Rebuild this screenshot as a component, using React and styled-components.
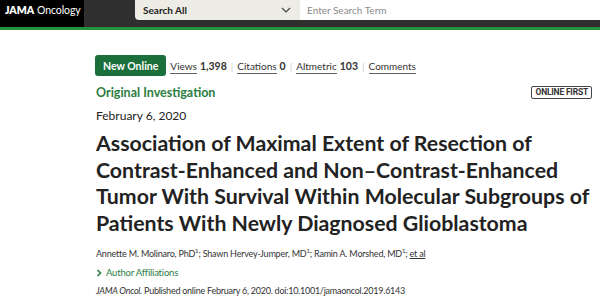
import React from 'react';
import styled, { createGlobalStyle } from 'styled-components';

const GlobalStyle = createGlobalStyle`
    body {
        margin: 0;
        background: #fff;
        font-family: 'Lato', 'Noto Sans', sans-serif;
    }
`

const Header = styled.header`
    display: flex;
    height: 27px;
    background-color: #2f2f2f;
    border-bottom: 3px solid #23913d;
`
const Logo = styled.div`
    width: 84px;
    background-color: #000;
    color: #fff;
    font-size: 10.5px;
    letter-spacing: -0.1px;
    display: flex;
    align-items: center;
    padding-left: 5px;
    padding-bottom: 7px;
    box-sizing: border-box;
    b {
        font-weight: 800;
        margin-right: 3px;
    }
`
const SearchBar = styled.div`
    flex: 1;
    display: flex;
    height: 20px;
    margin-left: 51px;
`
const SearchSelect = styled.div`
    width: 165px;
    background-color: #eeede5;
    border-bottom-left-radius: 4px;
    display: flex;
    align-items: center;
    justify-content: space-between;
    padding: 0 9px 0 8px;
    box-sizing: border-box;
    font-size: 10px;
    font-weight: 700;
    color: #222;
`
const SearchInput = styled.div`
    flex: 1;
    background-color: #fff;
    display: flex;
    align-items: center;
    padding-left: 7px;
    font-size: 10px;
    color: #8a8a8a;
`
const Main = styled.main`
    padding: 25px 8px 0 96px;
    color: #222;
`
const MetaRow = styled.div`
    display: flex;
    align-items: center;
    gap: 4px;
    font-size: 10px;
`
const NewBadge = styled.span`
    background-color: #1b6f3b;
    color: #fff;
    font-weight: 700;
    font-size: 10.5px;
    padding: 0 8px;
    height: 21px;
    display: flex;
    align-items: center;
    border-radius: 3px;
    margin-left: -1px;
    margin-right: 0;
`
const Metric = styled.span`
    color: #333;
    u {
        text-decoration: none;
        border-bottom: 1px solid #6a5d5d;
        padding-bottom: 1px;
    }
    b {
        font-weight: 700;
        margin-left: 3px;
        font-size: 10.5px;
    }
`
const Sep = styled.span`
    color: #ccc;
    font-size: 10px;
`
const TypeRow = styled.div`
    display: flex;
    justify-content: space-between;
    align-items: center;
    margin-top: 9px;
`
const ArticleType = styled.div`
    color: #2b7d3f;
    font-weight: 700;
    font-size: 12.5px;
`
const OnlineFirst = styled.span`
    border: 1.5px solid #444;
    border-radius: 2px;
    font-family: 'Roboto', sans-serif;
    font-weight: 700;
    font-size: 8.5px;
    letter-spacing: -0.2px;
    color: #333;
    padding: 0 3px;
    line-height: 11px;
`
const DateLine = styled.div`
    font-size: 12px;
    margin-top: 8px;
    color: #222;
`
const Title = styled.h1`
    margin: 7px 0 0;
    font-size: 21.3px;
    line-height: 26.5px;
    font-weight: 700;
    color: #222;
    white-space: nowrap;
`
const SmallText = styled.div`
    font-size: 9px;
    letter-spacing: -0.2px;
    color: #333;
`
const Authors = styled(SmallText)`
    margin-top: 11px;
    sup {
        font-size: 6px;
    }
    u {
        text-decoration: underline;
    }
`
const Affiliations = styled(SmallText)`
    margin-top: 8px;
    font-size: 9.5px;
    color: #2b7d3f;
    display: flex;
    align-items: center;
    gap: 3px;
`
const Citation = styled(SmallText)`
    margin-top: 7px;
    letter-spacing: -0.25px;
`

const App = () => {
    return (
        <>
            <GlobalStyle />
            <Header>
                <Logo><b>JAMA</b>Oncology</Logo>
                <SearchBar>
                    <SearchSelect>
                        Search All
                        <svg width="10" height="6" viewBox="0 0 10 6">
                            <path d="M1 1l4 4 4-4" fill="none" stroke="#444" strokeWidth="1.2" />
                        </svg>
                    </SearchSelect>
                    <SearchInput>Enter Search Term</SearchInput>
                </SearchBar>
            </Header>
            <Main>
                <MetaRow>
                    <NewBadge>New Online</NewBadge>
                    <Metric><u>Views</u><b>1,398</b></Metric>
                    <Sep>|</Sep>
                    <Metric><u>Citations</u><b>0</b></Metric>
                    <Sep>|</Sep>
                    <Metric><u>Altmetric</u><b>103</b></Metric>
                    <Sep>|</Sep>
                    <Metric><u>Comments</u></Metric>
                </MetaRow>
                <TypeRow>
                    <ArticleType>Original Investigation</ArticleType>
                    <OnlineFirst>ONLINE FIRST</OnlineFirst>
                </TypeRow>
                <DateLine>February 6, 2020</DateLine>
                <Title>
                    Association of Maximal Extent of Resection of<br />
                    Contrast-Enhanced and Non–Contrast-Enhanced<br />
                    Tumor With Survival Within Molecular Subgroups of<br />
                    Patients With Newly Diagnosed Glioblastoma
                </Title>
                <Authors>
                    Annette M. Molinaro, PhD<sup>1</sup>; Shawn Hervey-Jumper, MD<sup>1</sup>; Ramin A. Morshed, MD<sup>1</sup>; <u>et al</u>
                </Authors>
                <Affiliations>
                    <svg width="7" height="8" viewBox="0 0 7 8">
                        <path d="M1.5 1l3 3-3 3" fill="none" stroke="#2b7d3f" strokeWidth="1.6" />
                    </svg>
                    Author Affiliations
                </Affiliations>
                <Citation>
                    <i>JAMA Oncol.</i> Published online February 6, 2020. doi:10.1001/jamaoncol.2019.6143
                </Citation>
            </Main>
        </>
    );
}

export default App
